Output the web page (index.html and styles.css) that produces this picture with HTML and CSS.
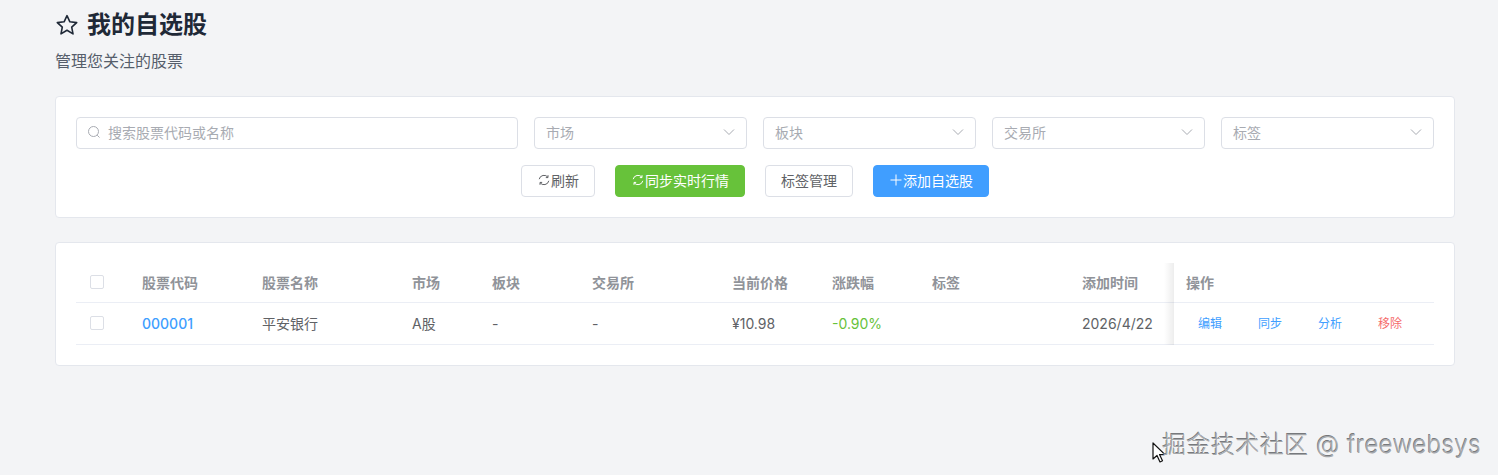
FILE: index.html
```html
<!DOCTYPE html>
<html lang="zh-CN">
<head>
<meta charset="utf-8">
<title>我的自选股</title>
<link rel="stylesheet" href="styles.css">
</head>
<body>
<main class="page">
  <header class="head">
    <h1 class="title">
      <svg class="star" viewBox="0 0 24 24" width="24" height="24"><path d="M12 2.6l2.9 6.2 6.8.8-5 4.6 1.3 6.7L12 17.2l-6 3.7 1.3-6.7-5-4.6 6.8-.8z" fill="none" stroke="#1f2937" stroke-width="1.6" stroke-linejoin="round"/></svg>
      <span>我的自选股</span>
    </h1>
    <p class="sub">管理您关注的股票</p>
  </header>

  <section class="card filter">
    <div class="filter-row">
      <div class="field search">
        <svg class="ico" viewBox="0 0 14 14" width="14" height="14"><circle cx="6.5" cy="6.5" r="5" fill="none" stroke="#a8abb2"/><path d="M10.2 10.2l2.3 2.3" stroke="#a8abb2"/></svg>
        <span>搜索股票代码或名称</span>
      </div>
      <div class="field select"><span>市场</span><svg class="chev" viewBox="0 0 14 14" width="14" height="14"><path d="M2 4.5l5 5 5-5" fill="none" stroke="#a8abb2"/></svg></div>
      <div class="field select"><span>板块</span><svg class="chev" viewBox="0 0 14 14" width="14" height="14"><path d="M2 4.5l5 5 5-5" fill="none" stroke="#a8abb2"/></svg></div>
      <div class="field select"><span>交易所</span><svg class="chev" viewBox="0 0 14 14" width="14" height="14"><path d="M2 4.5l5 5 5-5" fill="none" stroke="#a8abb2"/></svg></div>
      <div class="field select"><span>标签</span><svg class="chev" viewBox="0 0 14 14" width="14" height="14"><path d="M2 4.5l5 5 5-5" fill="none" stroke="#a8abb2"/></svg></div>
    </div>
    <div class="btn-row">
      <button class="btn w74"><svg viewBox="0 0 14 14" width="14" height="14"><path d="M2.2 6.2A4.9 4.9 0 0 1 11 4.4M11.8 7.8A4.9 4.9 0 0 1 3 9.6M11 2.2v2.4H8.8M3 11.8V9.4h2.2" fill="none" stroke="currentColor"/></svg>刷新</button>
      <button class="btn green w130"><svg viewBox="0 0 14 14" width="14" height="14"><path d="M2.2 6.2A4.9 4.9 0 0 1 11 4.4M11.8 7.8A4.9 4.9 0 0 1 3 9.6M11 2.2v2.4H8.8M3 11.8V9.4h2.2" fill="none" stroke="currentColor"/></svg>同步实时行情</button>
      <button class="btn w88">标签管理</button>
      <button class="btn blue w116"><svg viewBox="0 0 14 14" width="14" height="14"><path d="M7 1.5v11M1.5 7h11" fill="none" stroke="currentColor"/></svg>添加自选股</button>
    </div>
  </section>

  <section class="card list">
    <table class="tbl">
      <colgroup>
        <col class="c-check"><col class="c-code"><col class="c-name"><col class="c-market"><col class="c-sector"><col class="c-ex"><col class="c-price"><col class="c-chg"><col class="c-tag"><col class="c-time"><col>
      </colgroup>
      <thead>
        <tr>
          <th class="chk"><i class="box"></i></th>
          <th>股票代码</th><th>股票名称</th><th>市场</th><th>板块</th><th>交易所</th><th>当前价格</th><th>涨跌幅</th><th>标签</th><th>添加时间</th>
          <th class="ops">操作</th>
        </tr>
      </thead>
      <tbody>
        <tr>
          <td class="chk"><i class="box"></i></td>
          <td class="code">000001</td><td>平安银行</td><td>A股</td><td>-</td><td>-</td><td>¥10.98</td><td class="down">-0.90%</td><td></td><td>2026/4/22</td>
          <td class="ops"><div class="acts"><a>编辑</a><a>同步</a><a>分析</a><a class="del">移除</a></div></td>
        </tr>
      </tbody>
    </table>
  </section>
</main>

<svg class="cursor" viewBox="0 0 14 22" width="14" height="22"><path d="M1 1v16l4-3.5 3 6.5 2.5-1.2-3-6.2h5.5z" fill="#fff" stroke="#111" stroke-width="1.2" stroke-linejoin="round"/></svg>
<div class="mark">掘金技术社区 @ freewebsys</div>
</body>
</html>
```
FILE: styles.css
```css
* { box-sizing: border-box; }
html, body { margin: 0; height: 475px; overflow: hidden; }
body {
  background: #f3f4f6;
  font-family: Inter, "Noto Sans CJK SC", sans-serif;
  color: #606266;
  font-size: 14px;
  position: relative;
}
.page { width: 1400px; margin-left: 55px; }
.head { height: 96px; }
.title {
  margin: 0;
  padding-top: 8px;
  display: flex;
  align-items: center;
  gap: 8px;
  height: 42px;
  font-size: 24px;
  line-height: 34px;
  font-weight: 700;
  color: #1f2937;
}
.sub { margin: 7px 0 0; font-size: 16px; line-height: 24px; color: #565e6b; }
.card {
  width: 1400px;
  background: #fff;
  border: 1px solid #e4e7ed;
  border-radius: 4px;
  padding: 20px;
}
.filter { height: 122px; }
.filter-row { display: flex; gap: 16px; }
.field {
  height: 32px;
  border: 1px solid #dcdfe6;
  border-radius: 4px;
  display: flex;
  align-items: center;
  color: #a8abb2;
  padding: 0 11px 2px 11px;
}
.search { width: 442px; gap: 7px; padding-left: 10px; }
.select { width: 213px; justify-content: space-between; padding-right: 10px; }
.btn-row { display: flex; justify-content: center; gap: 20px; margin-top: 16px; }
.btn {
  height: 32px;
  padding: 0 0 2px;
  border: 1px solid #dcdfe6;
  border-radius: 4px;
  background: #fff;
  color: #606266;
  font: inherit;
  display: flex;
  align-items: center;
  justify-content: center;
}
.btn svg { display: block; }
.w74 { width: 74px; }
.w130 { width: 130px; }
.w88 { width: 88px; }
.w116 { width: 116px; }
.green { background: #67c23a; border-color: #67c23a; color: #fff; }
.blue { background: #409eff; border-color: #409eff; color: #fff; }
.list { margin-top: 24px; height: 124px; }
.tbl { width: 1358px; table-layout: fixed; border-collapse: collapse; }
.c-check { width: 54px; }
.c-code { width: 120px; }
.c-name { width: 150px; }
.c-market { width: 80px; }
.c-sector { width: 100px; }
.c-ex { width: 140px; }
.c-price { width: 100px; }
.c-chg { width: 100px; }
.c-tag { width: 150px; }
.c-time { width: 104px; }
th, td {
  padding: 0 12px;
  text-align: left;
  border-bottom: 1px solid #ebeef5;
  white-space: nowrap;
}
th { height: 39px; color: #909399; font-weight: 700; }
td { height: 42px; }
.chk { padding-left: 14px; }
.box {
  display: block;
  width: 14px;
  height: 14px;
  border: 1px solid #dcdfe6;
  border-radius: 2px;
  background: #fff;
}
.code { color: #409eff; font-weight: 500; }
.down { color: #67c23a; }
.ops { position: relative; }
.ops::before {
  content: "";
  position: absolute;
  top: 0;
  bottom: -1px;
  left: -10px;
  width: 10px;
  background: linear-gradient(to left, rgba(0, 0, 0, .07), rgba(0, 0, 0, 0));
}
.acts { display: flex; gap: 36px; padding: 0 0 2px 12px; font-size: 12px; color: #409eff; }
.del { color: #f56c6c; }
.cursor { position: absolute; left: 1152px; top: 442px; }
.mark {
  position: absolute;
  left: 1162px;
  top: 428px;
  font-size: 24px;
  line-height: 34px;
  font-weight: 300;
  color: #a4a7ab;
  letter-spacing: .47px;
  white-space: nowrap;
  text-shadow: 1px 1px 0 #f5f5f5, -.6px -.6px 0 #77797c;
}
```
